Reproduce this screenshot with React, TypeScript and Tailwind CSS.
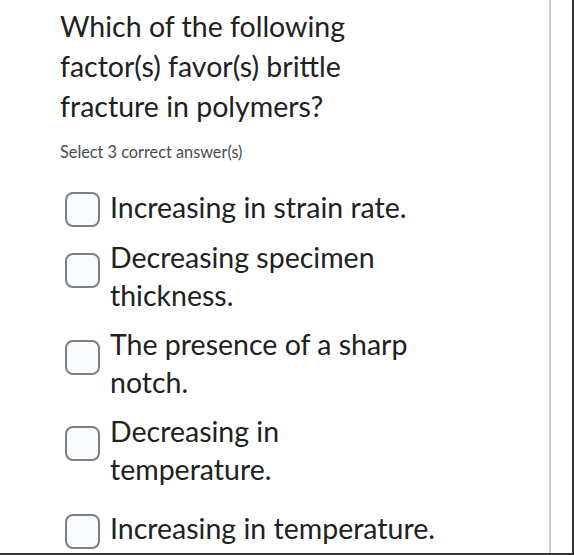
const options: { lines: string[]; offset: string; extra?: string }[] = [
    { lines: ['Increasing in strain rate.'], offset: 'mt-[4px]' },
    { lines: ['Decreasing specimen', 'thickness.'], offset: 'mt-[15px]' },
    { lines: ['The presence of a sharp', 'notch.'], offset: 'mt-[15px]' },
    { lines: ['Decreasing in', 'temperature.'], offset: 'mt-[14px]' },
    { lines: ['Increasing in temperature.'], offset: 'mt-[5px]', extra: 'mt-[10px]' },
];

function Checkbox({ offset }: { offset: string }) {
    return (
        <span
            className={`${offset} block w-[35px] h-[35px] shrink-0 rounded-[8px] border-2 border-[#7c8083] bg-[#f9fbff]`}
        />
    );
}

export default function App() {
    return (
        <div className="w-[574px] h-[555px] overflow-hidden bg-white border-r-2 border-b-2 border-[#333333] font-['Lato','Liberation_Sans',sans-serif] text-[#202122]">
            <div className="flex h-full">
                <main className="w-[551px] h-full border-r-2 border-[#cbcbcb] pl-[60px] pt-[6px]">
                    <h1 className="text-[28.5px] leading-[40px] font-normal">
                        Which of the following
                        <br />
                        factor(s) favor(s) brittle
                        <br />
                        fracture in polymers?
                    </h1>

                    <p className="mt-[14px] text-[16.3px] leading-[24px] text-[#494c4e]">Select 3 correct answer(s)</p>

                    <ul className="mt-[24px] flex flex-col gap-[11px]">
                        {options.map((o, i) => (
                            <li key={i} className={`flex items-start gap-[10px] pl-[5px] ${o.extra ?? ''}`}>
                                <Checkbox offset={o.offset} />
                                <span className="text-[28.5px] leading-[38px]">
                                    {o.lines.map((l, j) => (
                                        <span key={j} className="block">
                                            {l}
                                        </span>
                                    ))}
                                </span>
                            </li>
                        ))}
                    </ul>
                </main>
            </div>
        </div>
    );
}
